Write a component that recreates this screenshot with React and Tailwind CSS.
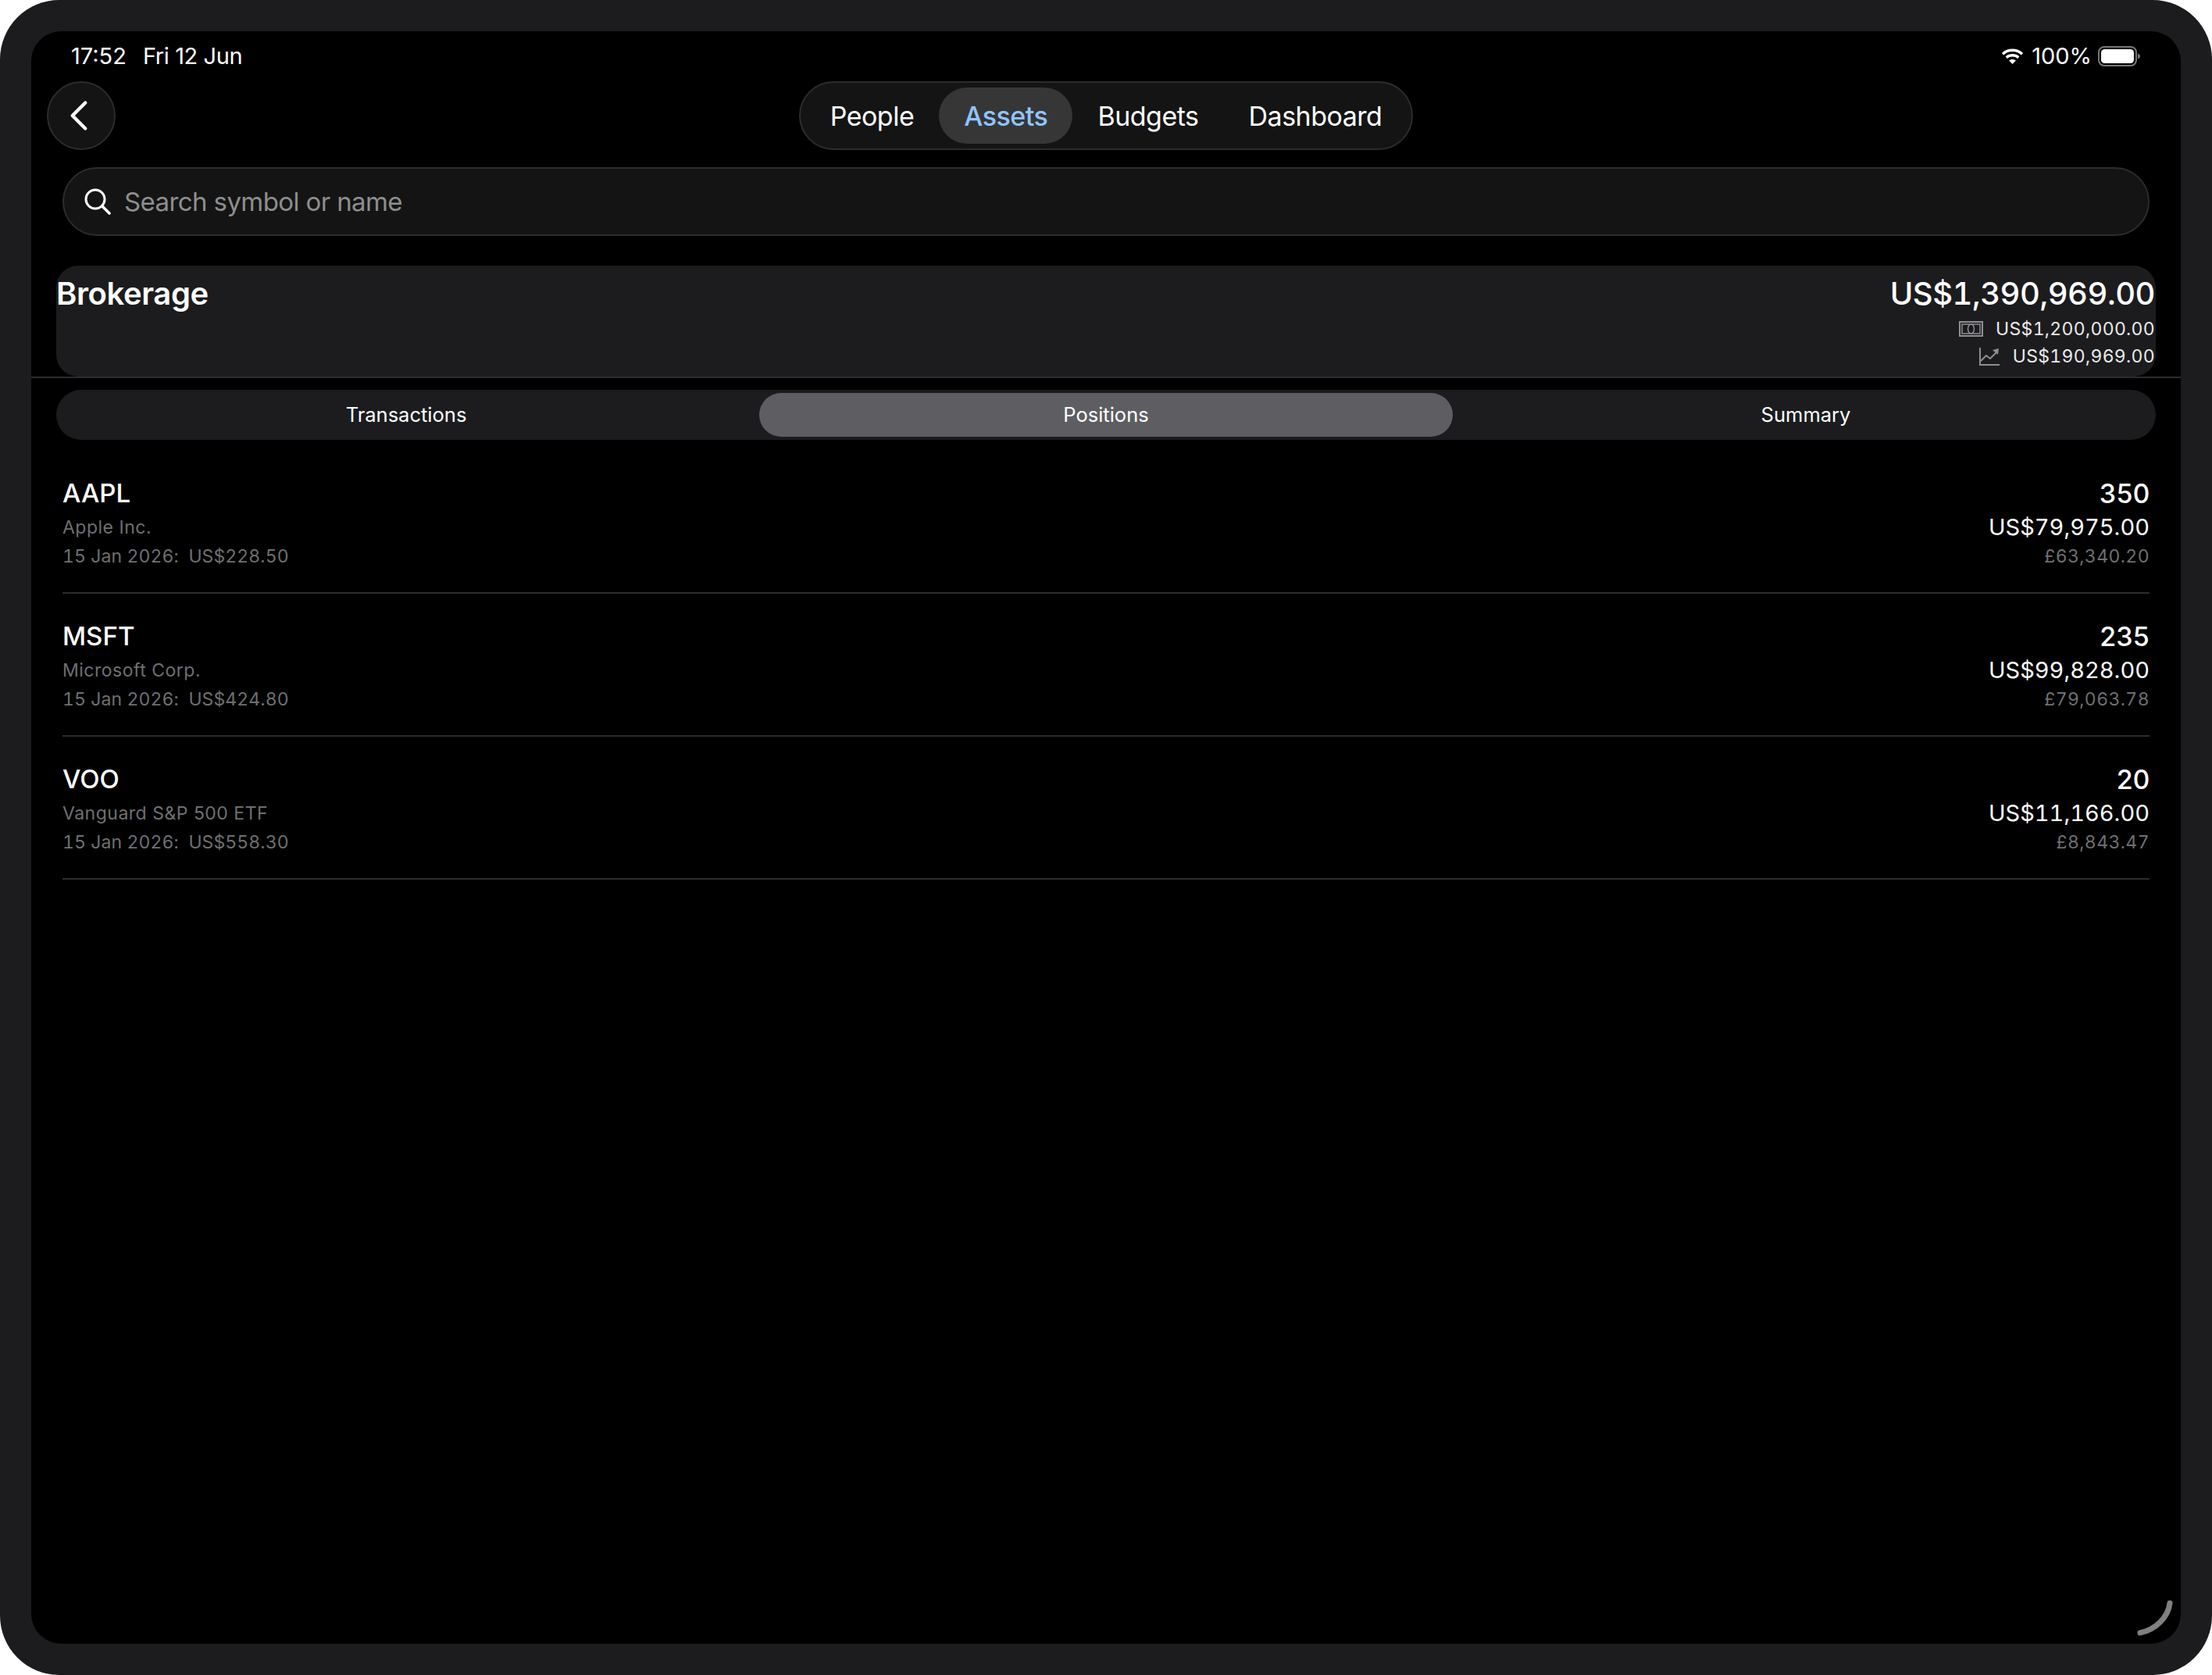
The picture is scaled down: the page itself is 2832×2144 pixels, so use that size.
import { ChevronLeft } from 'lucide-react'

const navItems = ['People', 'Assets', 'Budgets', 'Dashboard']
const tabs = ['Transactions', 'Positions', 'Summary']
const positions = [
  { symbol: 'AAPL', name: 'Apple Inc.', price: '15 Jan 2026:  US$228.50', qty: '350', usd: 'US$79,975.00', gbp: '£63,340.20' },
  { symbol: 'MSFT', name: 'Microsoft Corp.', price: '15 Jan 2026:  US$424.80', qty: '235', usd: 'US$99,828.00', gbp: '£79,063.78' },
  { symbol: 'VOO', name: 'Vanguard S&P 500 ETF', price: '15 Jan 2026:  US$558.30', qty: '20', usd: 'US$11,166.00', gbp: '£8,843.47' },
]

const WifiIcon = () => (
  <svg width="29" height="20" viewBox="0 0 28 20" fill="none" stroke="white" strokeWidth="3.4">
    <path d="M1.5 7.2C8.6 0.6 19.4 0.6 26.5 7.2" />
    <path d="M6.2 11.6C10.6 7.8 17.4 7.8 21.8 11.6" />
    <path d="M14 20L9.6 15.4C12 13.4 16 13.4 18.4 15.4Z" fill="white" stroke="none" />
  </svg>
)

const BatteryIcon = () => (
  <svg width="54" height="26" viewBox="0 0 54 26" fill="none">
    <rect x="1" y="1" width="48" height="24" rx="7" stroke="#77777a" strokeWidth="2" />
    <rect x="4" y="4" width="42" height="18" rx="4.5" fill="white" />
    <path d="M51 9.5C53 10.2 54 11.4 54 13C54 14.6 53 15.8 51 16.5Z" fill="#77777a" />
  </svg>
)

const SearchIcon = () => (
  <svg width="34" height="34" viewBox="0 0 34 34" fill="none" stroke="white" strokeWidth="3" strokeLinecap="round">
    <circle cx="14" cy="14" r="12" />
    <path d="M23 23L32 32" strokeWidth="3.6" />
  </svg>
)

const MoneyIcon = () => (
  <svg width="31" height="20" viewBox="0 0 31 20" fill="none" stroke="#8e8e93">
    <rect x="1" y="1" width="29" height="18" strokeWidth="2" />
    <rect x="4" y="4" width="23" height="12" strokeWidth="1.5" />
    <ellipse cx="15.5" cy="10" rx="4" ry="6" strokeWidth="1.5" />
  </svg>
)

const ChartIcon = () => (
  <svg width="26" height="23" viewBox="0 0 26 23" fill="none" stroke="#8e8e93" strokeWidth="2">
    <path d="M1 0V22H26" />
    <path d="M2 17L9 10L14 14L22 6" />
    <path d="M17 3L25 1L24 9Z" fill="#8e8e93" stroke="none" />
  </svg>
)

const PositionRow = ({ item }) => (
  <div className="h-[183px] mx-[40px] pt-[33px] flex justify-between border-b-2 border-[#2c2c2e]">
    <div>
      <p className="text-[33px] leading-[43px] font-medium text-white">{item.symbol}</p>
      <p className="mt-[3px] text-[23px] leading-[38px] tracking-[0.5px] text-[#6f6f72]">{item.name}</p>
      <p className="text-[23px] leading-[37px] tracking-[0.1px] tabular-nums text-[#6f6f72] whitespace-pre">{item.price}</p>
    </div>
    <div className="text-right tabular-nums">
      <p className="text-[34px] leading-[43px] font-medium tracking-[-0.6px] text-white">{item.qty}</p>
      <p className="mt-[3px] text-[29px] leading-[38px] text-white">{item.usd}</p>
      <p className="text-[23px] leading-[37px] tracking-[0.4px] text-[#6f6f72]">{item.gbp}</p>
    </div>
  </div>
)

const App = () => {
  return (
    <div className="w-[2832px] h-[2144px] bg-white overflow-hidden font-[Inter,sans-serif]">
      <div className="h-full rounded-[76px] bg-[#1c1c1e] p-[40px]">
        <div className="relative h-full rounded-[38px] bg-black flex flex-col">
          {/* status bar */}
          <div className="h-[64px] pl-[51px] pr-[52px] flex items-center justify-between text-white">
            <div className="flex gap-[21px] text-[29px]">
              <span>17:52</span>
              <span className="tracking-[-0.4px]">Fri 12 Jun</span>
            </div>
            <div className="flex items-center text-[29px]">
              <WifiIcon />
              <span className="ml-[10px] mr-[8px]">100%</span>
              <BatteryIcon />
            </div>
          </div>

          {/* header */}
          <div className="px-[20px] grid grid-cols-[1fr_auto_1fr] items-center">
            <button className="w-[88px] h-[88px] rounded-full bg-[#141414] border-2 border-[#2c2c2e] flex items-center justify-center text-white">
              <ChevronLeft size={66} strokeWidth={1.6} className="-ml-[6px]" />
            </button>
            <div className="h-[88px] px-[6px] rounded-full bg-[#141414] border-2 border-[#2c2c2e] flex items-center">
              {navItems.map((item) => (
                <div
                  key={item}
                  className={item === 'Assets'
                    ? 'h-[72px] px-[32px] rounded-full bg-[#363636] flex items-center text-[34px] tracking-[-0.5px] font-medium text-[#8fc5ff]'
                    : 'h-[72px] px-[32px] rounded-full flex items-center text-[34px] tracking-[-0.5px] text-white'}
                >
                  {item}
                </div>
              ))}
            </div>
          </div>

          {/* search */}
          <div className="mt-[22px] mx-[40px] h-[88px] pl-[26px] rounded-full bg-[#141414] border-2 border-[#2c2c2e] flex items-center gap-[17px]">
            <SearchIcon />
            <span className="pt-[2px] text-[33px] tracking-[-0.6px] text-[#8e8e8e]">Search symbol or name</span>
          </div>

          {/* account summary */}
          <div className="mt-[38px] mx-[32px] h-[142px] pt-[11px] rounded-[28px] bg-[#1c1c1e] flex justify-between">
            <p className="text-[40px] leading-[50px] font-semibold tracking-[-0.4px] text-white">Brokerage</p>
            <div className="pr-[1px] flex flex-col items-end text-white tabular-nums">
              <p className="text-[40px] leading-[50px] font-medium tracking-[-0.5px]">US$1,390,969.00</p>
              <div className="mt-[2px] h-[36px] flex items-center gap-[16px] text-[23px] tracking-[0.3px] text-[#ebebeb]">
                <MoneyIcon />
                <span>US$1,200,000.00</span>
              </div>
              <div className="h-[35px] flex items-center gap-[17px] text-[23px] tracking-[0.3px] text-[#ebebeb]">
                <ChartIcon />
                <span>US$190,969.00</span>
              </div>
            </div>
          </div>
          <div className="h-[2px] bg-[#2c2c2e]" />

          {/* tabs */}
          <div className="mt-[15px] mx-[32px] h-[64px] rounded-full bg-[#1c1c1e] grid grid-cols-3">
            {tabs.map((tab) => (
              <div
                key={tab}
                className={tab === 'Positions'
                  ? 'm-[4px] rounded-full bg-[#5e5e62] flex items-center justify-center text-[25.5px] text-white'
                  : 'm-[4px] flex items-center justify-center text-[25.5px] text-white'}
              >
                {tab}
              </div>
            ))}
          </div>

          {/* positions */}
          <div className="mt-[14px]">
            {positions.map((item) => (
              <PositionRow key={item.symbol} item={item} />
            ))}
          </div>

          {/* resize handle */}
          <svg className="absolute right-[10px] bottom-[10px]" width="46" height="46" viewBox="0 0 46 46" fill="none">
            <path d="M42 4C40 22 24 38 4 42" stroke="#808080" strokeWidth="7" strokeLinecap="round" />
          </svg>
        </div>
      </div>
    </div>
  )
}

export default App
